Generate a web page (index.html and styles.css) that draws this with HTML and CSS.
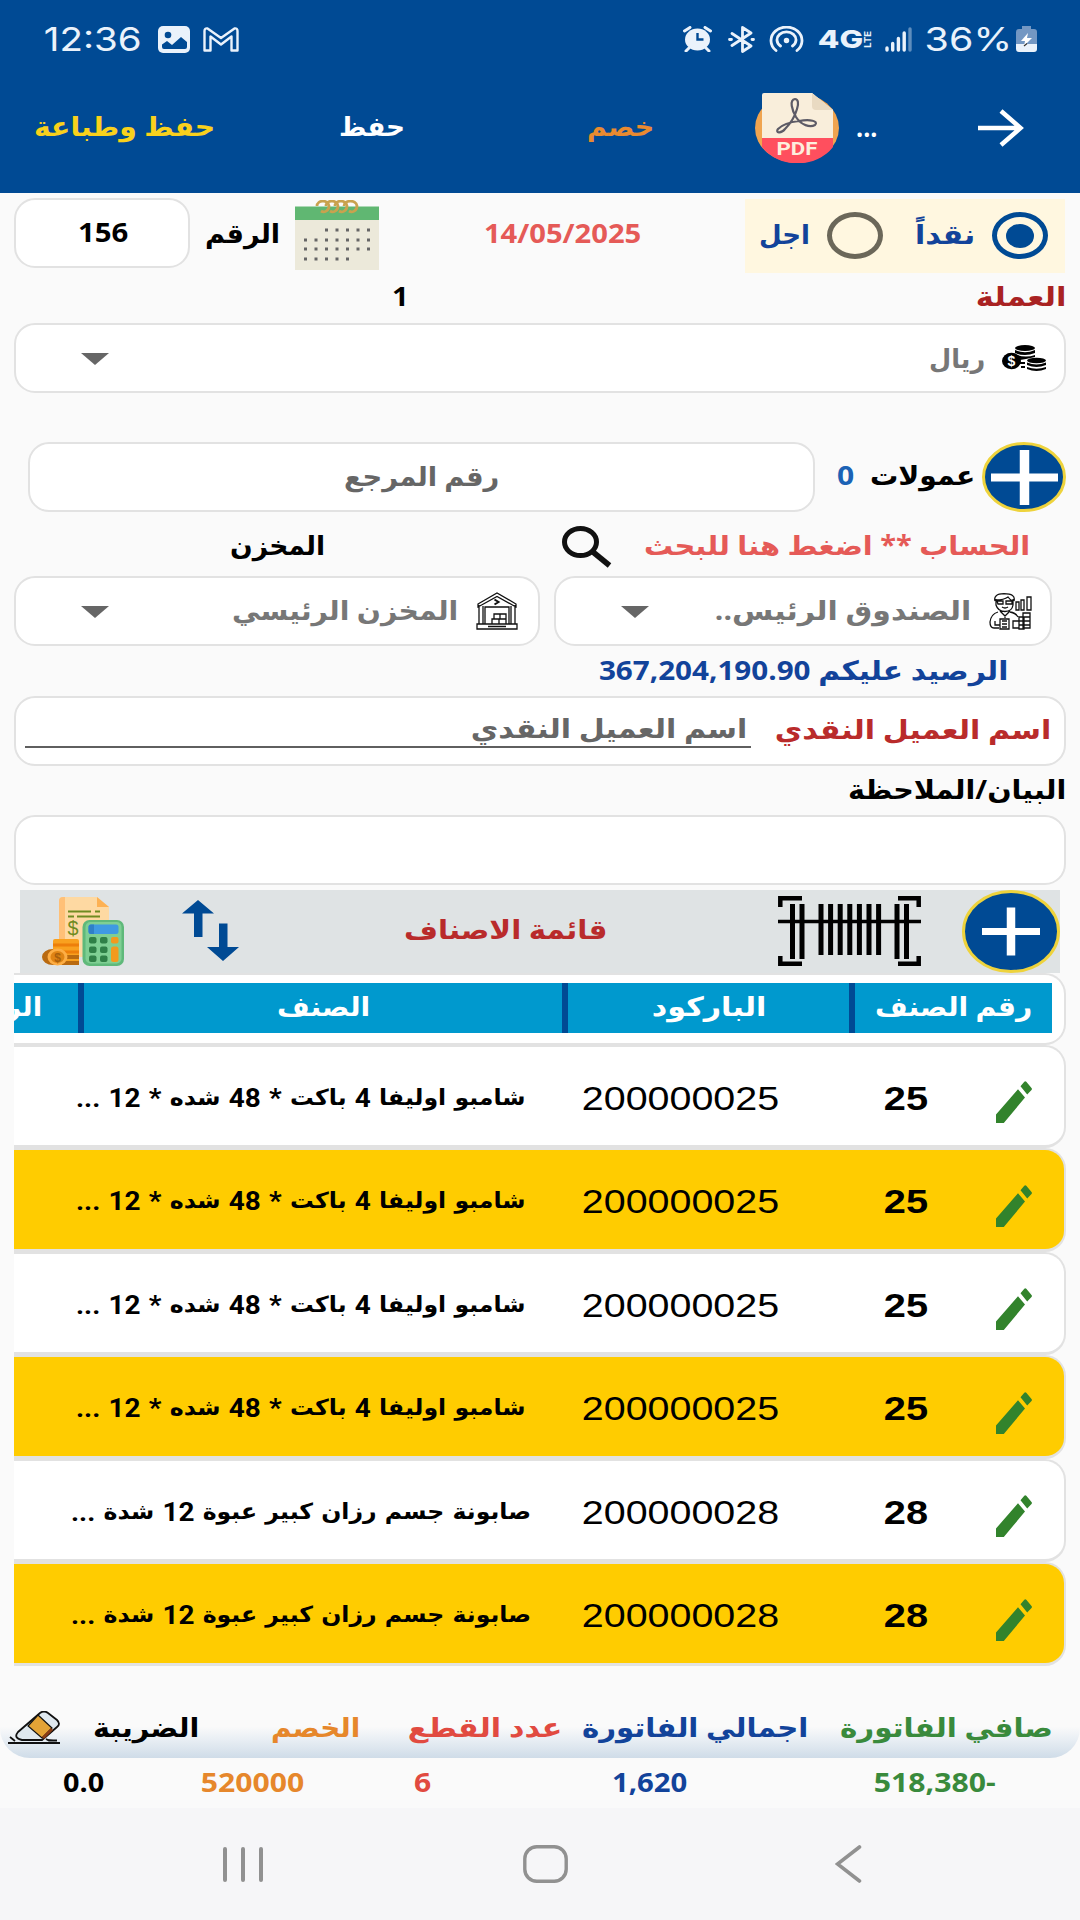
FILE: index.html
```html
<!DOCTYPE html>
<html lang="ar">
<head>
<meta charset="utf-8">
<title>فاتورة</title>
<link rel="stylesheet" href="styles.css">
</head>
<body>
<svg class="defs" width="0" height="0">
  <symbol id="pencil" viewBox="0 0 36 42" preserveAspectRatio="none"><path fill="#32832c" d="M0 33.500 22 8.200l7 8.300L7.800 42H0zM24.500 5.300 28.300.8q1-1.200 2 0L35.500 7q.9 1 0 2L31.200 13.500z"/></symbol>
  <symbol id="caret" viewBox="0 0 28 12" preserveAspectRatio="none"><path fill="#666" d="M0 0h28L14 12z"/></symbol>
</svg>

<header class="top">
  <div class="status">
    <span class="t clock"><b>12:36</b></span>
    <svg class="s-img" width="32" height="27" viewBox="0 0 32 27"><rect width="32" height="27" rx="5" fill="#eaf2fb"/><circle cx="10" cy="9" r="3.300" fill="#004a94"/><path fill="#004a94" d="M4 18.500 9 15l5 4 9-8 6 5v5q0 2-2 2H6q-2 0-2-2z"/></svg>
    <svg class="s-mail" width="36" height="25" viewBox="0 0 36 25" fill="none" stroke="#eaf2fb" stroke-width="2.400" stroke-linejoin="round"><path d="M1.500 23.500V4Q1.500 1 4.500 1.500L18 11 31.500 1.500Q34.500 1 34.500 4v19.500H28.500V9.500L18 17.500 7.500 9.500v14z"/></svg>
    <svg class="s-alarm" width="29" height="26" viewBox="0 0 29 26"><ellipse cx="14.500" cy="13.500" rx="12.500" ry="11" fill="#eaf2fb"/><path d="M1.500 5 7 1.500M27.500 5 22 1.500M6 22l-3 3M23 22l3 3" stroke="#eaf2fb" stroke-width="3" stroke-linecap="round"/><path d="M14.500 7v6.500h6" fill="none" stroke="#004a94" stroke-width="2.400"/></svg>
    <svg class="s-bt" width="27" height="27" viewBox="0 0 27 27" fill="none" stroke="#eaf2fb" stroke-width="2.800" stroke-linecap="round" stroke-linejoin="round"><path d="M4 7.500 23 20l-8.500 5.500v-24L23 7 4 19.500M1.500 13.500h2M24 13.500h1.500"/></svg>
    <svg class="s-hot" width="35" height="26" viewBox="0 0 35 26" fill="none" stroke="#eaf2fb" stroke-width="2.800" stroke-linecap="round"><path d="M7 24.500a15.500 13.500 0 1 1 21 0M11.500 20a9.500 8 0 1 1 12 0"/><circle cx="17.500" cy="14.500" r="2" fill="#eaf2fb" stroke-width="1.500"/></svg>
    <span class="t net"><b>4G</b></span>
    <span class="lte">LTE</span>
    <svg class="s-sig" width="27" height="25" viewBox="0 0 27 25" stroke="#eaf2fb" stroke-width="3.400" stroke-linecap="round"><path d="M2 23v-2M7.700 23v-6.500M13.400 23v-11.500M19.200 23V6"/><path d="M25 23V2" opacity=".4"/></svg>
    <span class="t pct"><b>36%</b></span>
    <svg class="s-bat" width="21" height="26" viewBox="0 0 21 26"><path fill="#7397c3" d="M6 0h9v3h3q3 0 3 3v12H0V6q0-3 3-3h3z"/><path fill="#eaf2fb" d="M0 18h21v5q0 3-3 3H3q-3 0-3-3z"/><path fill="#fff" d="m12 7-7 8h4l-1 5 8-8h-5z"/><path stroke="#333" stroke-width="1.200" d="m8 20 3-2.500"/></svg>
  </div>
  <div class="bar">
    <span class="t save-print"><b dir="rtl">حفظ وطباعة</b></span>
    <span class="t save"><b dir="rtl">حفظ</b></span>
    <span class="t disc"><b dir="rtl">خصم</b></span>
    <svg class="pdf" width="84" height="70" viewBox="0 0 84 70">
      <ellipse cx="42" cy="35" rx="42" ry="35" fill="#f0a450"/>
      <path fill="#f9eedb" d="M7 45V2q0-2 2-2h48l21 17v28z"/>
      <path fill="#e9dac2" d="M57 0 78 17H61q-4 0-4-4z"/>
      <path fill="#ff4f5e" d="M7 45h71v9A42 35 0 0 1 7 54z"/>
      <path fill="none" stroke="#5d5b66" stroke-width="2.200" d="M40 6c-6 1-3 11 1 18 5 8 14 11 19 8 4-4-5-6-16-4-9 1-17 4-21 8-3 4 3 5 7 0 5-5 10-13 12-20 2-6 1-10-2-10z"/>
      <text x="42" y="62" text-anchor="middle" textLength="41" lengthAdjust="spacingAndGlyphs" class="pdf-t">PDF</text>
    </svg>
    <span class="t dots"><b>...</b></span>
    <svg class="go" width="46" height="38" viewBox="0 0 46 38" fill="none" stroke="#fff" stroke-width="4.500"><path d="M0 19h42M23 2l19.500 17L23 36"/></svg>
  </div>
</header>

<main>
  <div class="row head-row">
    <div class="field num-box"><span class="t num"><b>156</b></span></div>
    <span class="t num-label"><b dir="rtl">الرقم</b></span>
    <svg class="cal" width="84" height="70" viewBox="0 0 84 70">
      <path fill="#ece9da" d="M0 20h84v50H0z"/><path fill="#60b772" d="M0 6.500h84V20H0z"/>
      <g fill="none" stroke="#c9a24e" stroke-width="2.800"><path d="M22 6c0-6 11-7 12 0 0 5-5 7-8 5"/><path d="M31 6c0-6 11-7 12 0 0 5-5 7-8 5"/><path d="M40 6c0-6 11-7 12 0 0 5-5 7-8 5"/><path d="M49 6c0-6 12-7 13 0 0 5-5 7-8 5"/></g>
      <g stroke="#666" stroke-width="3" stroke-dasharray="3 7.500"><path d="M30 30h45M9 40h66M9 49h66M9 59h45"/></g>
    </svg>
    <span class="t date"><b>14/05/2025</b></span>
    <div class="pay">
      <span class="t later"><b dir="rtl">اجل</b></span>
      <span class="radio"></span>
      <span class="t cash"><b dir="rtl">نقداً</b></span>
      <span class="radio on"></span>
    </div>
  </div>

  <div class="row cur-label"><span class="t one"><b>1</b></span><span class="t cur"><b dir="rtl">العملة</b></span></div>

  <div class="field cur-box">
    <svg class="caret" width="28" height="12"><use href="#caret"/></svg>
    <span class="t riyal"><b dir="rtl">ريال</b></span>
    <svg class="coins" width="44" height="26" viewBox="0 0 44 26">
      <ellipse cx="23" cy="3" rx="10" ry="3"/><path d="M13 5q10 4.500 20 0v3q-10 4-20 0zM15 10q9 3 18 0v2l-9 2-6 1zM18 17h5v2h-5zM19 21h4v2h-4z"/>
      <ellipse cx="34.500" cy="15.500" rx="9.500" ry="2.800"/><path d="M25 17.500q9.500 4 19 0v2.500q-9.500 4-19 0zM25 22q9.500 3.500 19 0v2q-9.500 4-19 0z"/>
      <ellipse cx="9.500" cy="16" rx="9.500" ry="8.300"/><text x="9.500" y="21" text-anchor="middle" class="coin-t">$</text>
    </svg>
  </div>

  <div class="row ref-row">
    <div class="field ref-box"><span class="t ref"><b dir="rtl">رقم المرجع</b></span></div>
    <span class="t zero"><b>0</b></span>
    <span class="t comm"><b dir="rtl">عمولات</b></span>
    <svg class="add1" width="84" height="70" viewBox="0 0 84 70"><ellipse cx="42" cy="35" rx="40.500" ry="33.500" fill="#004a94" stroke="#eed33c" stroke-width="3"/><path stroke="#fff" stroke-width="8" d="M9 35.500h67"/><path stroke="#fff" stroke-width="9.500" d="M42.500 8v55"/></svg>
  </div>

  <div class="row acc-label">
    <span class="t store-l"><b dir="rtl">المخزن</b></span>
    <svg class="mag" width="50" height="42" viewBox="0 0 50 42" fill="none" stroke="#111"><ellipse cx="18.500" cy="16" rx="16" ry="13.500" stroke-width="5"/><path d="m31 26 16.500 13.500" stroke-width="5.500"/></svg>
    <span class="t acc-l"><b dir="rtl">الحساب ** اضغط هنا للبحث</b></span>
  </div>

  <div class="row selects">
    <div class="field store-box">
      <svg class="caret" width="28" height="12"><use href="#caret"/></svg>
      <span class="t store"><b dir="rtl">المخزن الرئيسي</b></span>
      <svg class="ware" width="42" height="38" viewBox="0 0 42 38" fill="none" stroke="#111" stroke-width="1.300"><path d="M1 32h40v5H1zM3 32V13M7 32V14M39 32V13M35 32V14M2 12 21 1l19 11v3L21 4.500 2 15zM9 32V15h24v17M16 32v-5h7v5M23 32v-5h7v5M18 27v-5h6v5M24 27v-5h6v5M12 34.500h18"/><path stroke-width="2" d="m18.500 7.500 4 2.500-4 2.500"/></svg>
    </div>
    <div class="field acc-box">
      <svg class="caret" width="28" height="12"><use href="#caret"/></svg>
      <span class="t acc"><b dir="rtl">الصندوق الرئيس..</b></span>
      <svg class="man" width="43" height="37" viewBox="0 0 43 37" fill="none" stroke="#111" stroke-width="1.300"><path d="M6 8q-2-7 9-7.300 12 0 10 7.300M7 7q8 0 12-3 2 3 5 4M7 6v6q2 6.500 9 6.500t8-6.500V6M8 8h6v3H9zM17 8h6v3h-6zM13 14q3 2 6 0M11 18l5 5 5-5M16 22v3M9 19Q2 21 1 29q0 6 4 6h5M6 28v4h5M21 19q6 1 8 5M11 26h9v10h-9zM13 28h5M13 31h5M13 34h5M27 17V9h3v8zM32 17V7h3v10zM38 17V4h4v13zM24 35v-7h6v7zM30 36v-12h5v12zM30 28h5M30 32h5M34 35V20h7v15zM34 24h7M34 28h7M34 32h7"/></svg>
    </div>
  </div>

  <div class="row balance"><span class="t bal"><b dir="rtl">الرصيد عليكم 367,204,190.90</b></span></div>

  <div class="field client">
    <div class="hint"><span class="t client-h"><b dir="rtl">اسم العميل النقدي</b></span></div>
    <span class="t client-l"><b dir="rtl">اسم العميل النقدي</b></span>
  </div>

  <div class="row note"><span class="t note-l"><b dir="rtl">البيان/الملاحظة</b></span></div>
  <div class="field wide"></div>

  <div class="list-bar">
    <svg class="calc" width="82" height="69" viewBox="0 0 82 69">
      <path fill="#fed9a2" d="M17 4q0-4 4-4h34l12 10v50H17z"/><path fill="#ffc077" d="M17 4q0-4 4-4h2v44h-6z"/><path fill="#fdb153" d="m55 0 12 10H55z"/>
      <path stroke="#6f8b20" stroke-width="2.200" d="M26 14.500h23M53 14.500h5M26 19.500h6M35 19.500h23"/><text x="31" y="38" text-anchor="middle" textLength="11" lengthAdjust="spacingAndGlyphs" class="bill-t">$</text>
      <rect x="11" y="42" width="26" height="26" rx="2" fill="#f9a11f"/><path stroke="#ed7f0b" stroke-width="3" d="M11 48h26M13 55h24"/><path stroke="#b96a10" stroke-width="4" d="M20 60h17M20 66h17"/>
      <ellipse cx="11" cy="60" rx="11" ry="8" fill="#b96a10"/><ellipse cx="15.500" cy="60" rx="10" ry="8.500" fill="#fdae45"/><ellipse cx="15.500" cy="60" rx="7" ry="6" fill="#df8414"/><text x="15.500" y="64.500" text-anchor="middle" class="coin2-t">$</text>
      <rect x="40.500" y="23" width="41.500" height="46" rx="7" fill="#5fb97a"/><rect x="43.500" y="25" width="36" height="41.500" rx="5" fill="#7fcf93"/><rect x="46.500" y="27.500" width="30" height="9.500" rx="2.500" fill="#3f9ae2"/><path fill="#2f80c8" d="M49 27.500h3V37h-3q-2.500 0-2.500-2.500V30q0-2.500 2.500-2.500z"/>
      <g fill="#2f8047"><rect x="47" y="40" width="7.500" height="6.500" rx="2"/><rect x="58" y="40" width="7.500" height="6.500" rx="2"/><rect x="47" y="49.500" width="7.500" height="6.500" rx="2"/><rect x="58" y="49.500" width="7.500" height="6.500" rx="2"/><rect x="47" y="58.500" width="7.500" height="6.500" rx="2"/><rect x="58" y="58.500" width="7.500" height="6.500" rx="2"/></g>
      <rect x="69" y="40" width="7.500" height="6.500" rx="2" fill="#f39a1e"/><rect x="69" y="49.500" width="7.500" height="15.500" rx="2.500" fill="#f39a1e"/>
    </svg>
    <svg class="sort" width="57" height="61" viewBox="0 0 57 61" fill="#004a94"><path d="M16 0 32 13.500H20.500V37h-8.500V13.500H0zM37 23.500h8.500V47H57L41 61 25 47h12z"/></svg>
    <span class="t list-t"><b dir="rtl">قائمة الاصناف</b></span>
    <svg class="scan" width="143" height="70" viewBox="0 0 143 70" fill="none" stroke="#000"><path stroke-width="4.500" d="M2.300 11V2.300H24M120 2.300h20.700V11M2.300 60v7.700H24M120 67.700h20.700V60"/><path stroke-width="3.600" d="M0 25.500h143"/><path stroke-width="5" d="M14.500 8v55M24 8v55M43 8v51M52.600 8v51M62.200 8v51M71.800 8v51M81.400 8v51M91 8v51M100.600 8v51M119 8v55M128.500 8v55"/></svg>
    <svg class="add2" width="98" height="83" viewBox="0 0 98 83"><ellipse cx="49" cy="41.500" rx="47.500" ry="40" fill="#004a94" stroke="#eed33c" stroke-width="3"/><path stroke="#fff" stroke-width="7" d="M20 41.500h58"/><path stroke="#fff" stroke-width="8.500" d="M49 17.500v48"/></svg>
  </div>

  <section class="table">
    <div class="thead"><div class="strip">
      <div class="th c4"><span class="t h4"><b dir="rtl">الر</b></span></div>
      <div class="th c3"><span class="t h3"><b dir="rtl">الصنف</b></span></div>
      <div class="th c2"><span class="t h2"><b dir="rtl">الباركود</b></span></div>
      <div class="th c1"><span class="t h1"><b dir="rtl">رقم الصنف</b></span></div>
    </div></div>
    <div class="item"><span class="t name"><b dir="rtl">شامبو اوليفا <i>4</i> باكت <i>*</i> <i>48</i> شده <i>*</i> <i>12</i> <i>...</i></b></span><span class="t code"><b>200000025</b></span><span class="t id"><b>25</b></span><svg class="pen" width="36" height="42"><use href="#pencil"/></svg></div>
    <div class="item alt"><span class="t name"><b dir="rtl">شامبو اوليفا <i>4</i> باكت <i>*</i> <i>48</i> شده <i>*</i> <i>12</i> <i>...</i></b></span><span class="t code"><b>200000025</b></span><span class="t id"><b>25</b></span><svg class="pen" width="36" height="42"><use href="#pencil"/></svg></div>
    <div class="item"><span class="t name"><b dir="rtl">شامبو اوليفا <i>4</i> باكت <i>*</i> <i>48</i> شده <i>*</i> <i>12</i> <i>...</i></b></span><span class="t code"><b>200000025</b></span><span class="t id"><b>25</b></span><svg class="pen" width="36" height="42"><use href="#pencil"/></svg></div>
    <div class="item alt"><span class="t name"><b dir="rtl">شامبو اوليفا <i>4</i> باكت <i>*</i> <i>48</i> شده <i>*</i> <i>12</i> <i>...</i></b></span><span class="t code"><b>200000025</b></span><span class="t id"><b>25</b></span><svg class="pen" width="36" height="42"><use href="#pencil"/></svg></div>
    <div class="item soap"><span class="t name"><b dir="rtl">صابونة جسم رزان كبير عبوة <i>12</i> شدة <i>...</i></b></span><span class="t code"><b>200000028</b></span><span class="t id"><b>28</b></span><svg class="pen" width="36" height="42"><use href="#pencil"/></svg></div>
    <div class="item alt soap"><span class="t name"><b dir="rtl">صابونة جسم رزان كبير عبوة <i>12</i> شدة <i>...</i></b></span><span class="t code"><b>200000028</b></span><span class="t id"><b>28</b></span><svg class="pen" width="36" height="42"><use href="#pencil"/></svg></div>
  </section>
</main>

<footer>
  <div class="sum-labels">
    <svg class="erase" width="52" height="34" viewBox="0 0 52 34"><path fill="#dfe8ee" stroke="#111" stroke-width="1.800" d="M10 21 32 2q4-3 8 0l9 7q4 4 0 7L34 29H14q-9-2-4-8z"/><path fill="#e3a336" stroke="#111" stroke-width="1.200" d="m30 4 14 13-10 10-14-12z"/><path stroke="#8a3d16" stroke-width="3" d="m44 18-9 9"/><path stroke="#111" stroke-width="1.800" d="M0 32h52M2 26l5 4M38 28l3 1.500h8"/></svg>
    <span class="t l-tax"><b dir="rtl">الضريبة</b></span>
    <span class="t l-disc"><b dir="rtl">الخصم</b></span>
    <span class="t l-cnt"><b dir="rtl">عدد القطع</b></span>
    <span class="t l-tot"><b dir="rtl">اجمالي الفاتورة</b></span>
    <span class="t l-net"><b dir="rtl">صافي الفاتورة</b></span>
  </div>
  <div class="sum-values">
    <span class="t v-tax"><b>0.0</b></span>
    <span class="t v-disc"><b>520000</b></span>
    <span class="t v-cnt"><b>6</b></span>
    <span class="t v-tot"><b>1,620</b></span>
    <span class="t v-net"><b dir="rtl">-518,380</b></span>
  </div>
</footer>
<nav>
  <svg class="n1" width="40" height="37" viewBox="0 0 40 37" stroke="#919191" stroke-width="4" stroke-linecap="round"><path d="M2 3v31M20 3v31M38 3v31"/></svg>
  <svg class="n2" width="45" height="38" viewBox="0 0 45 38"><rect x="1.800" y="1.800" width="41.400" height="34.400" rx="12" fill="none" stroke="#919191" stroke-width="3.400"/></svg>
  <svg class="n3" width="27" height="38" viewBox="0 0 27 38" fill="none" stroke="#919191" stroke-width="3.600" stroke-linecap="round"><path d="M24.500 2 2.500 19l22 17"/></svg>
</nav>
<script src="fit.js"></script>
</body>
</html>
```
FILE: styles.css
```css
* { box-sizing: border-box; }
body { margin: 0; width: 1080px; height: 1920px; overflow: hidden; background: #fafafa; direction: ltr; color: #000;
  font-family: "Open Sans", "DejaVu Sans", sans-serif; font-size: 26.5px; }
svg { display: block; flex: none; }
.defs { position: absolute; }

/* label of a fixed width, its text is stretched to fill it */
.t { display: block; flex: none; height: 40px; line-height: 40px; white-space: nowrap; margin-bottom: 4px; }
.t b { display: inline-block; font-weight: 700; transform-origin: 0 50%; }

.top { height: 193px; background: #004a94; color: #fff; }
.status { display: flex; align-items: center; height: 78px; font-family: Inter, sans-serif; font-size: 33px; color: #eaf2fb; }
.status .t { margin-bottom: 0; }
.status .t b { font-weight: 400; }
.clock { width: 95px; margin-left: 45px; }
.s-img { margin-left: 18px; }
.s-mail { margin-left: 13px; }
.s-alarm { margin-left: 444px; }
.s-bt { margin-left: 16px; }
.s-hot { margin-left: 14px; }
.status .net { width: 43px; margin-left: 15px; font-size: 25px; }
.status .net b { font-weight: 800; }
.lte { writing-mode: vertical-rl; transform: rotate(180deg); font-size: 9.5px; line-height: 10px; font-weight: 700; width: 10px; margin-left: 1px; }
.s-sig { margin-left: 12px; }
.pct { width: 81px; margin-left: 15px; }
.s-bat { margin-left: 8px; }

.bar { display: flex; align-items: center; height: 100px; }
.bar .t { margin-bottom: 5px; }
.save-print { width: 178px; margin-left: 35px; color: #f9d11c; }
.save { width: 63px; margin-left: 127px; }
.disc { width: 64px; margin-left: 185px; color: #e98a30; }
.pdf { margin-left: 103px; }
.pdf-t { font: 700 18px Roboto, sans-serif; fill: #fdeedd; }
.bar .dots { width: 20px; margin-left: 18px; margin-bottom: 3px; }
.go { margin-left: 101px; }

main { height: 1472px; }
.row { display: flex; align-items: center; }
.field { display: flex; align-items: center; height: 70px; flex: none; background: #fff; border: 2.5px solid #e2e2e2; border-radius: 21px; }

.head-row { height: 80px; }
.head-row > .t { margin-bottom: 0; }
.num-box { width: 176px; margin-left: 14px; }
.num { width: 49px; margin-left: 63px; margin-bottom: 3px; }
.num-label { width: 72px; margin-left: 16px; }
.cal { margin-left: 17px; margin-top: 4px; }
.date { width: 155px; margin-left: 106px; color: #e55a57; }
.pay { display: flex; align-items: center; width: 320px; height: 74px; margin-left: 105px; margin-top: 5px; background: #fff7e0; color: #12439a; flex: none; }
.pay .t { margin-bottom: 3px; }
.later { width: 48px; margin-left: 15px; }
.cash { width: 58px; margin-left: 32px; }
.radio { display: grid; place-items: center; width: 56px; height: 47px; margin-left: 19px; border: 5px solid #6b6759; border-radius: 50%; flex: none; }
.radio.on { border-color: #004a94; }
.radio.on::after { content: ""; width: 28px; height: 24px; border-radius: 50%; background: #004a94; }

.cur-label { height: 49px; padding-bottom: 3px; }
.cur-label .t { margin: 0; }
.cur-label .one { width: 11px; margin-left: 393px; }
.cur-label .cur { width: 87px; margin-left: 573px; color: #a92222; }
.cur-box { width: 1052px; margin-left: 14px; margin-top: 1px; color: #777; }
.caret { margin-left: 65px; margin-top: 1px; }
.riyal { width: 54px; margin-left: 821px; margin-bottom: 1px; }
.coins { margin-left: 18px; }
.coin-t { font: 700 14px "Liberation Sans", sans-serif; fill: #fff; }

.ref-row { height: 70px; margin-top: 49px; }
.ref-box { width: 787px; margin-left: 28px; color: #666; }
.ref { width: 153px; margin-left: 315px; margin-bottom: 3px; }
.zero { width: 17px; margin-left: 22px; color: #1b62b5; }
.comm { width: 102px; margin-left: 17px; }
.add1 { margin-left: 9px; }

.acc-label { height: 64px; padding-top: 6px; }
.store-l { width: 92px; margin-left: 231px; }
.mag { margin-left: 239px; }
.acc-l { width: 383px; margin-left: 33px; color: #e55a57; }

.selects { height: 70px; color: #777; }
.store-box { width: 526px; margin-left: 14px; }
.store { width: 223px; margin-left: 124px; margin-bottom: 3px; }
.ware { margin-left: 20px; }
.acc-box { width: 498px; margin-left: 14px; }
.acc { width: 253px; margin-left: 67px; margin-bottom: 3px; }
.man { margin-left: 20px; }

.balance { height: 50px; }
.balance .t { margin-bottom: 3px; }
.bal { width: 406px; margin-left: 600px; color: #12439a; }
.client { width: 1052px; margin-left: 14px; }
.hint { width: 726px; height: 35px; margin-left: 9px; margin-top: 1px; border-bottom: 2px solid #5f5f5f; color: #666; margin-bottom: 3px; }
.client-h { width: 273px; margin-left: 447px; margin-top: -5px; }
.client-l { width: 273px; margin-left: 25px; margin-bottom: 5px; color: #b92b2b; }
.note { height: 49px; }
.note-l { width: 215px; margin-left: 849px; }
.wide { width: 1052px; margin-left: 14px; }

.list-bar { display: flex; align-items: center; width: 1040px; height: 83px; margin: 5px 0 0 20px; background: #dfe3e4; }
.calc { margin-left: 22px; }
.sort { margin-left: 58px; margin-bottom: 2px; }
.list-t { width: 201px; margin-left: 166px; margin-bottom: 6px; color: #b92b2b; }
.scan { margin-left: 172px; margin-bottom: 1px; }
.add2 { margin-left: 41px; }

.table { margin-left: 14px; width: 1052px; overflow: hidden; }
.thead { height: 71.5px; padding: 8px 12px 0 0; background: #fff; border: solid #e2e2e2; border-width: 2px 2px 2px 0; border-radius: 0 21px 21px 0; }
.strip { display: flex; height: 50px; background: #0099ce; color: #fff; }
.th { display: flex; align-items: center; border-right: 6px solid #004a94; flex: none; }
.th .t { margin-bottom: 4px; }
.c4 { width: 70px; }
.c3 { width: 484px; }
.c2 { width: 287px; }
.c1 { width: 197px; border: 0; }
.h4 { width: 37px; margin-left: -11px; }
.h3 { width: 90px; margin-left: 194px; }
.h2 { width: 111px; margin-left: 85px; }
.h1 { width: 155px; margin-left: 21px; }
.item { display: flex; align-items: center; height: 103.5px; background: #fff; border: solid #e2e2e2; border-width: 2px 2px 3px 0; border-radius: 0 21px 21px 0; }
.item.alt { background: #ffcc00; }
.item .t { margin-bottom: 0; margin-top: 4px; }
.name { width: 450px; margin-left: 62px; font-family: "DejaVu Sans", sans-serif; font-size: 22px; }
.name i { font: 700 26px/1 Roboto, sans-serif; vertical-align: -2px; }
.soap .name { width: 460px; margin-left: 57px; margin-right: -5px; }
.code { width: 195px; margin-left: 57px; font-family: "Liberation Sans", Arial, sans-serif; font-size: 34px; }
.code b { font-weight: 400; }
.id { width: 42px; margin-left: 107px; font-family: "Liberation Sans", Arial, sans-serif; font-size: 34px; }
.pen { margin-left: 69px; margin-top: 13px; }

footer { margin-top: 30px; height: 113px; }
.sum-labels { display: flex; align-items: center; height: 63px; border-radius: 0 0 30px 30px; background: linear-gradient(#fafafa 50%, #ebf0f5 68%, #cfdce8); }
.sum-labels .t { margin-bottom: 0; }
.erase { margin-left: 8px; margin-top: 3px; }
.l-tax { width: 103px; margin-left: 34px; }
.l-disc { width: 86px; margin-left: 75px; color: #e6872b; }
.l-cnt { width: 151px; margin-left: 51px; color: #e14a40; }
.l-tot { width: 223px; margin-left: 23px; color: #12439a; }
.l-net { width: 210px; margin-left: 35px; color: #398a3c; }
.sum-values { display: flex; align-items: center; height: 50px; }
.sum-values .t { margin-bottom: 2px; }
.v-tax { width: 41px; margin-left: 63px; }
.v-disc { width: 102px; margin-left: 98px; color: #e6872b; }
.v-cnt { width: 17px; margin-left: 110px; color: #e14a40; }
.v-tot { width: 74px; margin-left: 182px; color: #12439a; }
.v-net { width: 120px; margin-left: 188px; color: #398a3c; }

nav { display: flex; align-items: center; height: 112px; background: #f6f6f8; }
.n1 { margin-left: 223px; }
.n2 { margin-left: 260px; }
.n3 { margin-left: 267px; }
.bill-t { font: 400 20px "Liberation Sans", sans-serif; fill: #6f8b20; }
.coin2-t { font: 700 12px "Liberation Sans", sans-serif; fill: #a85f0c; }
```
FILE: fit.js
```js
// Stretch every label so that its glyphs fill the label's box from edge to edge.
const ctx = document.createElement("canvas").getContext("2d");
for (const box of document.querySelectorAll(".t")) {
  const run = box.firstElementChild;
  // labels that mix two fonts are measured as laid out
  if (run.children.length) {
    run.style.transform = `scaleX(${box.clientWidth / run.offsetWidth})`;
    continue;
  }
  const cs = getComputedStyle(run);
  ctx.font = `${cs.fontWeight} ${cs.fontSize} ${cs.fontFamily}`;
  ctx.direction = cs.direction;
  ctx.textAlign = "left";
  const m = ctx.measureText(run.textContent);
  const scale = box.clientWidth / (m.actualBoundingBoxLeft + m.actualBoundingBoxRight);
  run.style.transform = `translateX(${m.actualBoundingBoxLeft * scale}px) scaleX(${scale})`;
}
```
